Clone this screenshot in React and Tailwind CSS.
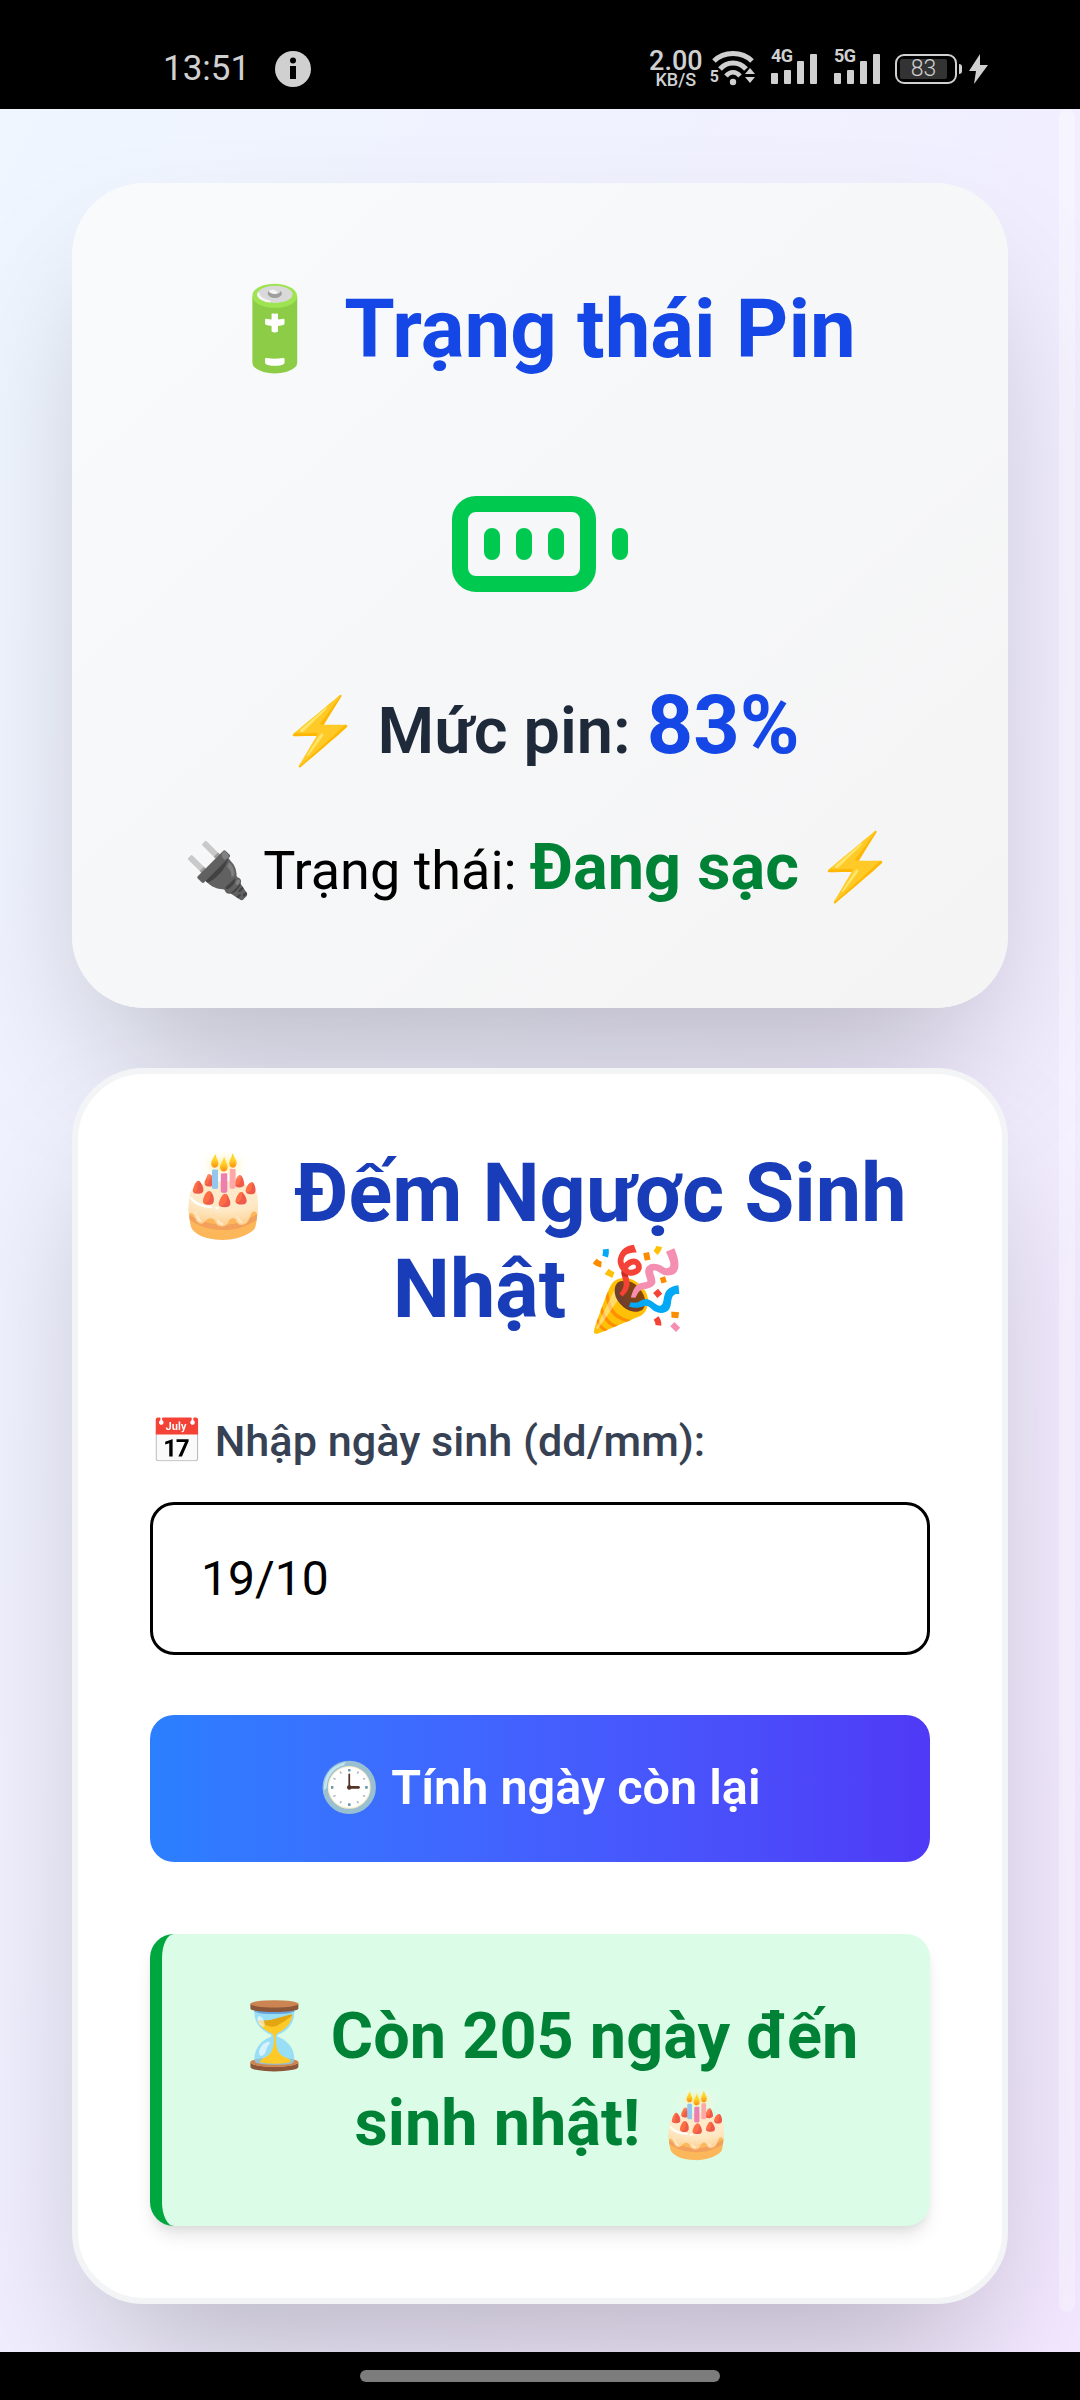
import React from 'react';

const font = "font-['Roboto',sans-serif]";

const WifiIcon = () => (
  <svg width="44" height="36" viewBox="0 0 44 36" fill="none" className="mt-[-2px]">
    <path d="M2 11C12 1 30 1 40 11" stroke="#d0d0d0" strokeWidth="5" />
    <path d="M8 19C15 11 27 11 34 19" stroke="#d0d0d0" strokeWidth="5" />
    <path d="M14 26C18 21 24 21 28 26" stroke="#d0d0d0" strokeWidth="4.5" />
    <circle cx="21" cy="32" r="3.2" fill="#d0d0d0" />
    <path d="M33 24l5-6 5 6zM33 27h10l-5 6z" fill="#d0d0d0" />
  </svg>
);

const Signal = ({ label }) => (
  <div className="relative w-[46px] h-[30px]">
    <span className="absolute left-0 top-[-8px] text-[18px] font-bold leading-[20px] tracking-[-0.5px] text-[#d0d0d0]">{label}</span>
    <div className="absolute inset-0 flex items-end justify-between">
      <div className="w-[7px] h-[11px] bg-[#d0d0d0] rounded-[1px]" />
      <div className="w-[7px] h-[14px] bg-[#d0d0d0] rounded-[1px]" />
      <div className="w-[7px] h-[23px] bg-[#d0d0d0] rounded-[1px]" />
      <div className="w-[7px] h-[30px] bg-[#d0d0d0] rounded-[1px]" />
    </div>
  </div>
);

const StatusBar = () => (
  <div className="h-[109px] bg-black flex items-center justify-between pl-[163px] pr-[92px] pt-[28px] text-[#d0d0d0]">
    <div className="flex items-center gap-[25px]">
      <span className="text-[35px] leading-none">13:51</span>
      <svg width="36" height="36" viewBox="0 0 36 36">
        <circle cx="18" cy="18" r="18" fill="#d0d0d0" />
        <rect x="15" y="15" width="6" height="13" fill="#000" />
        <circle cx="18" cy="9.5" r="3" fill="#000" />
      </svg>
    </div>
    <div className="flex items-center">
      <div className="flex flex-col items-center w-[50px] mr-[9px]">
        <span className="text-[27px] font-medium leading-[21px]">2.00</span>
        <span className="text-[18px] font-medium leading-[15px]">KB/S</span>
      </div>
      <span className="text-[16px] font-bold self-end mb-[-2px] mr-[-7px]">5</span>
      <WifiIcon />
      <div className="ml-[15px]"><Signal label="4G" /></div>
      <div className="ml-[17px]"><Signal label="5G" /></div>
      <div className="ml-[15px] w-[62px] h-[30px] rounded-[9px] border-2 border-[#d0d0d0] p-[3px] flex">
        <div className="w-[47px] bg-[#333] rounded-[2px] flex items-center justify-center text-[23px] font-light leading-none">83</div>
      </div>
      <div className="ml-[2px] w-[3px] h-[10px] bg-[#d0d0d0] rounded-r" />
      <svg className="ml-[7px]" width="19" height="30" viewBox="0 0 19 30">
        <path d="M11 0L0 17h7l-2 13L19 11h-8z" fill="#d0d0d0" />
      </svg>
    </div>
  </div>
);

export default function App() {
  return (
    <div className={`${font} w-[1080px] h-[2400px] flex flex-col overflow-hidden`}>
      <StatusBar />
      <div className="relative h-[2243px] bg-gradient-to-br from-blue-50 to-purple-100 px-[72px] pt-[74px] flex flex-col gap-[60px]">
        <div className="h-[825px] rounded-[72px] bg-gradient-to-br from-gray-50 to-[#f4f4f5] shadow-[0_75px_150px_-36px_rgba(0,0,0,0.25)] flex flex-col items-center pt-[98px]">
          <h1 className="text-[81.6px] leading-[96px] font-bold text-blue-700">🔋 Trạng thái Pin</h1>
          <svg className="mt-[71px]" width="192" height="192" viewBox="0 0 24 24" fill="none" stroke="#00c950" strokeWidth="2" strokeLinecap="round" strokeLinejoin="round">
            <rect x="2" y="7" width="16" height="10" rx="2" />
            <path d="M6 11v2M10 11v2M14 11v2M22 11v2" />
          </svg>
          <p className="mt-[41px] text-[64.8px] leading-[90px] font-semibold text-gray-800">⚡ Mức pin: <span className="text-[81px] font-bold text-blue-700">83%</span></p>
          <p className="mt-[51px] text-[54px] leading-[81px] text-black">🔌 Trạng thái: <span className="text-[64.8px] font-bold text-green-700">Đang sạc ⚡</span></p>
        </div>
        <div className="rounded-[72px] border-[6px] border-gray-100 bg-white shadow-[0_75px_150px_-36px_rgba(0,0,0,0.25)] p-[72px] h-[1236px]">
          <h2 className="text-[81px] leading-[96px] font-bold text-blue-800 text-center">🎂 Đếm Ngược Sinh Nhật 🎉</h2>
          <label className="block mt-[72px] text-[43.2px] font-medium leading-[63px] text-gray-700">📅 Nhập ngày sinh (dd/mm):</label>
          <input readOnly value="19/10" className="block mt-[29px] w-full h-[153px] rounded-[24px] border-[3px] border-black px-[48px] text-[48px] text-black" />
          <button className="block mt-[60px] w-full h-[147px] rounded-[24px] bg-gradient-to-r from-blue-500 to-indigo-600 text-white text-[48.6px] font-semibold">🕒 Tính ngày còn lại</button>
          <div className="mt-[72px] h-[292px] rounded-[24px] border-l-[12px] border-green-600 bg-green-100 shadow-[0_12px_18px_-3px_rgba(0,0,0,0.1),0_6px_12px_-6px_rgba(0,0,0,0.1)] flex items-center justify-center px-[48px]">
            <p className="text-[64.8px] leading-[87px] font-bold text-green-700 text-center">⏳ Còn 205 ngày đến sinh nhật! 🎂</p>
          </div>
        </div>
        <div className="absolute right-[5px] top-[0px] w-[16px] h-[2203px] bg-white/30 rounded-full" />
      </div>
      <div className="flex-1 bg-black flex items-center justify-center">
        <div className="w-[360px] h-[12px] rounded-full bg-[#888]" />
      </div>
    </div>
  );
}
